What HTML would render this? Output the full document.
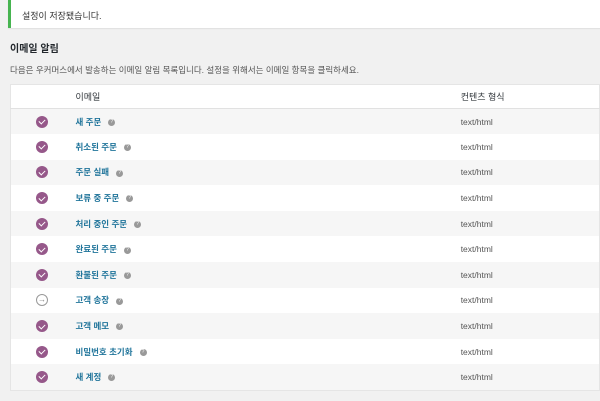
<!DOCTYPE html>
<html><head><meta charset="utf-8"><style>
*{margin:0;padding:0;box-sizing:border-box}
body{width:600px;height:401px;background:#f1f1f1;font-family:"Liberation Sans","Noto Sans CJK KR",sans-serif;font-size:9px;color:#444;position:relative;overflow:hidden}
.notice{position:absolute;left:8px;top:0;width:600px;height:28px;background:#fff;border-left:3px solid #46b450;box-shadow:0 1px 1px rgba(0,0,0,.08)}
.notice span{position:absolute;left:11px;top:9px;font-size:9px;color:#333}
h2{position:absolute;left:10px;top:40px;font-size:10px;font-weight:bold;color:#23282d}
.desc{position:absolute;left:10px;top:64px;font-size:8.5px;color:#555}
table{position:absolute;left:10px;top:84px;width:590px;border-collapse:collapse;background:#fff;border:1px solid #e5e5e5}
th{height:24px;text-align:left;font-weight:normal;font-size:9px;color:#32373c;border-bottom:1px solid #e1e1e1}
td{height:25.6px;font-size:8.5px;background:#fff}
tr.g td{background:#f6f6f6}
.ic{width:65px;padding-left:25px}
.c{display:inline-block;width:12px;height:12px;border-radius:50%;background:#96588a;position:relative;vertical-align:middle}
.c:after{content:"";position:absolute;left:3.5px;top:2.5px;width:3px;height:5px;border:solid #fff;border-width:0 1.6px 1.6px 0;transform:rotate(45deg)}
.o{display:inline-block;width:12px;height:12px;border-radius:50%;border:1px solid #999;vertical-align:middle;font-size:8px;line-height:10px;text-align:center;color:#888}
a{color:#21759b;text-decoration:none;font-weight:bold}
.q{display:inline-block;width:7px;height:7px;border-radius:50%;background:#999;margin-left:7px;vertical-align:middle;color:#fff;font-size:5px;line-height:7px;text-align:center}
.t{width:139px;color:#555}
.m{width:386px}
</style></head><body>
<div class="notice"><span>설정이 저장됐습니다.</span></div>
<h2>이메일 알림</h2>
<div class="desc">다음은 우커머스에서 발송하는 이메일 알림 목록입니다. 설정을 위해서는 이메일 항목을 클릭하세요.</div>
<table>
<tr><th></th><th>이메일</th><th>컨텐츠 형식</th></tr>
<tr class="g"><td class="ic"><span class="c"></span></td><td class="m"><a>새 주문</a><span class="q">?</span></td><td class="t">text/html</td></tr>
<tr><td class="ic"><span class="c"></span></td><td class="m"><a>취소된 주문</a><span class="q">?</span></td><td class="t">text/html</td></tr>
<tr class="g"><td class="ic"><span class="c"></span></td><td class="m"><a>주문 실패</a><span class="q">?</span></td><td class="t">text/html</td></tr>
<tr><td class="ic"><span class="c"></span></td><td class="m"><a>보류 중 주문</a><span class="q">?</span></td><td class="t">text/html</td></tr>
<tr class="g"><td class="ic"><span class="c"></span></td><td class="m"><a>처리 중인 주문</a><span class="q">?</span></td><td class="t">text/html</td></tr>
<tr><td class="ic"><span class="c"></span></td><td class="m"><a>완료된 주문</a><span class="q">?</span></td><td class="t">text/html</td></tr>
<tr class="g"><td class="ic"><span class="c"></span></td><td class="m"><a>환불된 주문</a><span class="q">?</span></td><td class="t">text/html</td></tr>
<tr><td class="ic"><span class="o">→</span></td><td class="m"><a>고객 송장</a><span class="q">?</span></td><td class="t">text/html</td></tr>
<tr class="g"><td class="ic"><span class="c"></span></td><td class="m"><a>고객 메모</a><span class="q">?</span></td><td class="t">text/html</td></tr>
<tr><td class="ic"><span class="c"></span></td><td class="m"><a>비밀번호 초기화</a><span class="q">?</span></td><td class="t">text/html</td></tr>
<tr class="g"><td class="ic"><span class="c"></span></td><td class="m"><a>새 계정</a><span class="q">?</span></td><td class="t">text/html</td></tr>
</table>
</body></html>
